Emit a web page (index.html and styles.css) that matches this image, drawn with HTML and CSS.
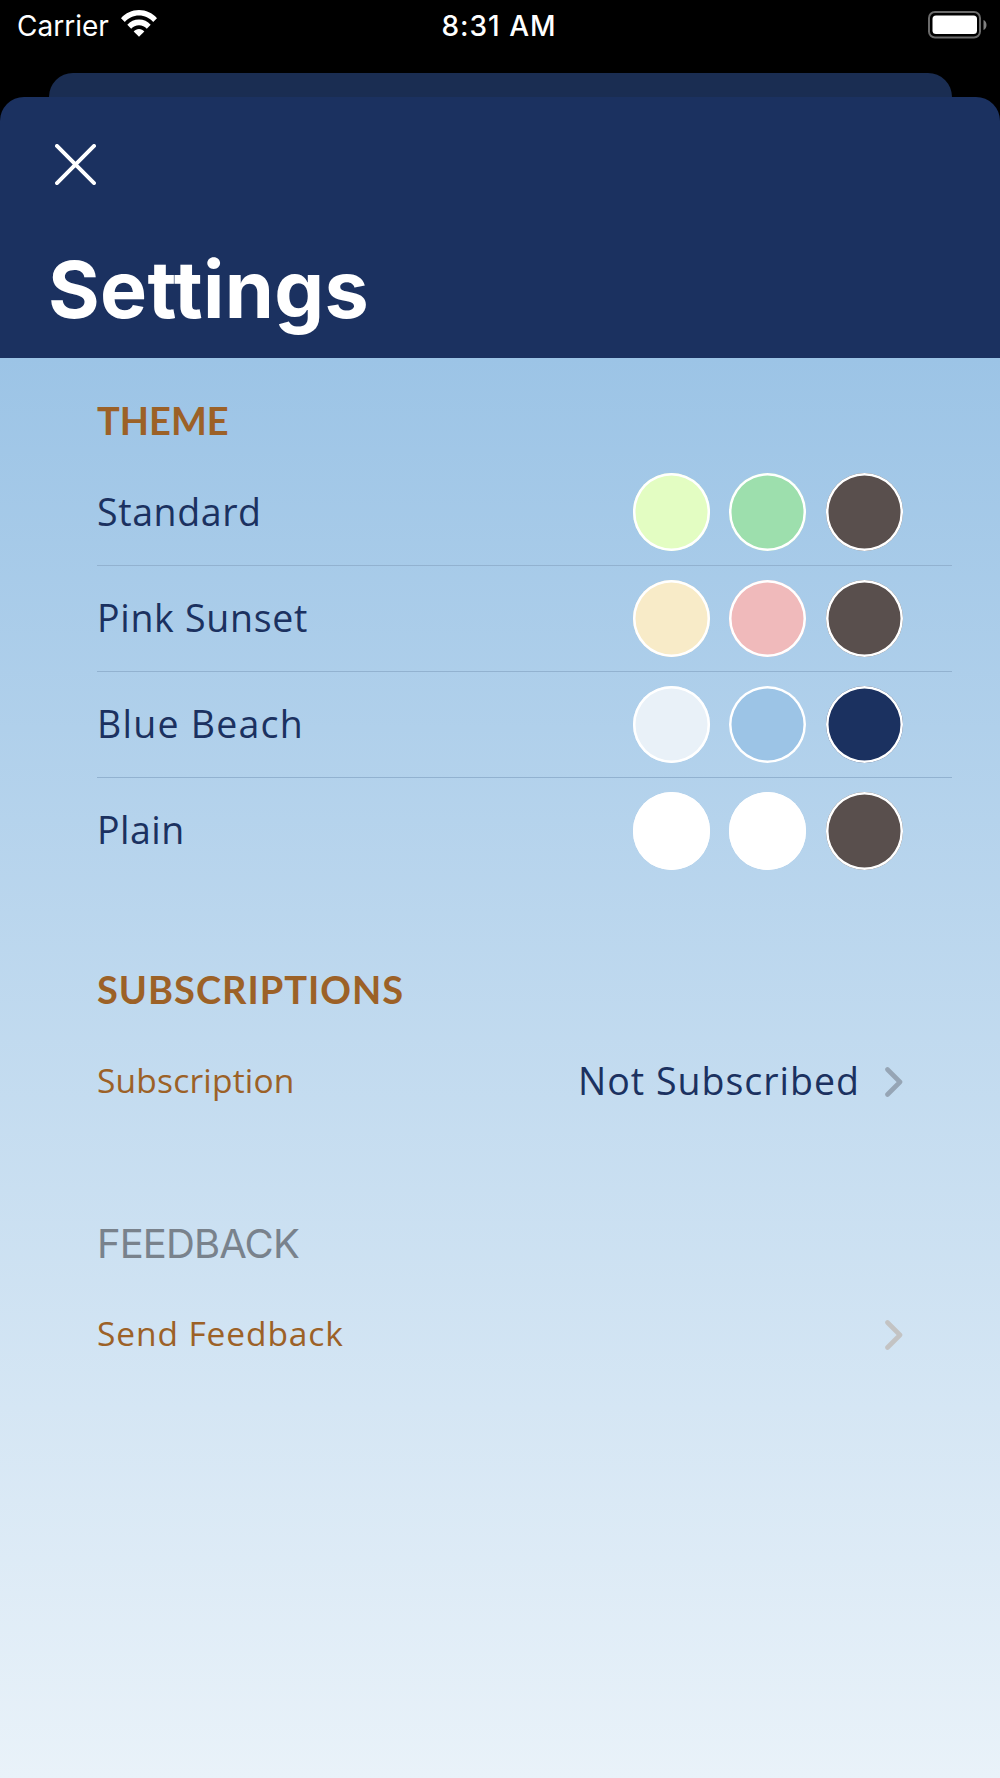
FILE: index.html
```html
<!DOCTYPE html>
<html lang="en">
<head>
    <meta charset="UTF-8">
    <meta name="viewport" content="width=device-width, initial-scale=1.0">
    <title>Settings</title>
    <link rel="stylesheet" href="styles.css">
</head>

<body>
    <div class="status-bar">
        <div class="carrier">
            <span class="carrier-name">Carrier</span>
            <svg class="wifi" viewBox="0 0 36 27">
                <path d="M0 8.2C4.6 3 11 0 18 0s13.400 3 18 8.200l-3.800 3.900C28.600 8 23.600 5.600 18 5.600S7.400 8 3.800 12.100z"/>
                <path d="M6.300 14.700C9.300 11.400 13.400 9.500 18 9.500s8.700 1.900 11.700 5.200l-3.900 4C23.900 16.500 21.100 15.200 18 15.200s-5.900 1.300-7.800 3.500z"/>
                <path d="M12.700 21.400C14 19.800 15.900 18.900 18 18.900s4 .9 5.300 2.500L18 26.800z"/>
            </svg>
        </div>
        <span class="time">8:31 AM</span>
        <div class="battery-wrap">
            <svg class="battery" viewBox="0 0 59 28">
                <rect x="1" y="1" width="51" height="25.500" rx="6" fill="none" stroke="#6b6b6b" stroke-width="2"/>
                <rect x="4.500" y="4.500" width="44.500" height="18.500" rx="3.500" fill="#fff"/>
                <path d="M55.500 9c4 1.500 4 8.500 0 10z" fill="#808080"/>
            </svg>
        </div>
    </div>

    <div class="back-card"></div>

    <div class="sheet">
        <div class="header">
            <svg class="close" viewBox="0 0 42 42">
                <path d="M2 2l38 38M40 2L2 40"/>
            </svg>
            <h1>Settings</h1>
        </div>

        <div class="content">
            <h2 class="theme-title">THEME</h2>
            <div class="row">
                <span class="name standard">Standard</span>
                <div class="swatches">
                    <i class="swatch lime"></i>
                    <i class="swatch green"></i>
                    <i class="swatch brown"></i>
                </div>
            </div>
            <div class="row">
                <span class="name pink-sunset">Pink Sunset</span>
                <div class="swatches">
                    <i class="swatch cream"></i>
                    <i class="swatch pink"></i>
                    <i class="swatch brown"></i>
                </div>
            </div>
            <div class="row">
                <span class="name blue-beach">Blue Beach</span>
                <div class="swatches">
                    <i class="swatch ice"></i>
                    <i class="swatch sky"></i>
                    <i class="swatch navy"></i>
                </div>
            </div>
            <div class="row last">
                <span class="name plain">Plain</span>
                <div class="swatches">
                    <i class="swatch white"></i>
                    <i class="swatch white"></i>
                    <i class="swatch brown"></i>
                </div>
            </div>

            <h2 class="subscriptions-title">SUBSCRIPTIONS</h2>
            <div class="row last">
                <span class="link subscription">Subscription</span>
                <div class="detail">
                    <span class="name value">Not Subscribed</span>
                    <svg class="chevron dark" viewBox="0 0 18 30"><path d="M2.500 2.500L15 15 2.500 27.500"/></svg>
                </div>
            </div>

            <h2 class="feedback-title">FEEDBACK</h2>
            <div class="row last">
                <span class="link send">Send Feedback</span>
                <svg class="chevron" viewBox="0 0 18 30"><path d="M2.500 2.500L15 15 2.500 27.500"/></svg>
            </div>
        </div>
    </div>
</body>
</html>
```
FILE: styles.css
```css
* {
    box-sizing: border-box;
}

body {
    margin: 0;
    min-height: 1778px;
    background: #000;
    font-family: "Open Sans", sans-serif;
    display: flex;
    flex-direction: column;
}

h1,
h2 {
    margin: 0;
}

.status-bar {
    height: 72.500px;
    padding: 0 13px 0 17px;
    display: grid;
    grid-template-columns: 1fr auto 1fr;
    color: #fff;
    font-family: Inter, sans-serif;
    font-size: 28px;
    line-height: 52px;
}

.carrier {
    display: flex;
    gap: 12px;
}

.wifi {
    width: 36px;
    height: 27px;
    margin-top: 10px;
    fill: #fff;
}

.time {
    margin: 0 3px 0 -3px;
    font-weight: 500;
    letter-spacing: 1px;
}

.battery-wrap {
    display: flex;
    justify-content: flex-end;
}

.battery {
    width: 59px;
    height: 28px;
    margin-top: 10.500px;
}

.back-card {
    height: 50px;
    margin: 0 48.500px -25.500px;
    border-radius: 24px 24px 0 0;
    background: #1a2d52;
}

.sheet {
    flex: 1;
    display: flex;
    flex-direction: column;
    border-radius: 24px 24px 0 0;
    overflow: hidden;
}

.header {
    height: 260.500px;
    padding: 47px 48px 0;
    background: #1b3160;
}

.close {
    display: block;
    width: 41px;
    height: 41px;
    margin-left: 7px;
    fill: none;
    stroke: #fff;
    stroke-width: 4;
    stroke-linecap: round;
}

h1 {
    margin-top: 56px;
    color: #fff;
    font-family: Inter, sans-serif;
    font-size: 79px;
    font-weight: 700;
    letter-spacing: 0.300px;
    line-height: 96px;
}

.content {
    flex: 1;
    padding-left: 97px;
    background: linear-gradient(#9cc4e6, #e9f2f9);
}

h2 {
    display: flex;
    align-items: flex-end;
    color: #9c6127;
    font-family: Lato, sans-serif;
    font-size: 38px;
    font-weight: 700;
    line-height: 44px;
}

.theme-title {
    height: 102px;
    padding-bottom: 18px;
}

.subscriptions-title {
    height: 144px;
    padding-bottom: 18px;
    letter-spacing: 1px;
}

.feedback-title {
    height: 147px;
    padding-bottom: 16px;
    color: #79828c;
    font-family: Inter, sans-serif;
    font-size: 40px;
    font-weight: 400;
    letter-spacing: -0.900px;
}

.row {
    height: 106.250px;
    margin-right: 48.500px;
    padding-right: 48.500px;
    display: flex;
    align-items: center;
    justify-content: space-between;
    border-bottom: 1px solid #92b2d0;
}

.row.last {
    border-bottom-color: transparent;
}

.name {
    padding-bottom: 2px;
    color: #1b3160;
    font-size: 37.500px;
}

.link {
    padding-bottom: 2px;
    color: #9c6127;
    font-size: 33.500px;
}

.standard { letter-spacing: 0.600px; }
.pink-sunset { letter-spacing: 0.700px; }
.blue-beach { letter-spacing: 1.250px; }
.plain { letter-spacing: 0.500px; }
.subscription { letter-spacing: 0.200px; }
.value { letter-spacing: 1px; }
.send { letter-spacing: 0.900px; }

.swatches {
    display: flex;
    gap: 19.300px;
}

.swatch {
    width: 77.300px;
    height: 77.300px;
    border-radius: 50%;
    box-shadow: inset 0 0 0 2.500px #fff;
}

.lime { background: #e3fdc2; }
.green { background: #9ddfad; }
.brown { background: #594f4d; }
.cream { background: #f8ebc8; }
.pink { background: #f0babb; }
.ice { background: #e9f1f8; }
.sky { background: #9cc4e6; }
.navy { background: #1b3160; }
.white { background: #fff; }

.detail {
    display: flex;
    align-items: center;
    gap: 25px;
}

.chevron {
    width: 18px;
    height: 30px;
    margin-top: 2px;
    fill: none;
    stroke: #c3c3c3;
    stroke-width: 4.600;
    stroke-linecap: round;
    stroke-linejoin: round;
}

.chevron.dark {
    stroke: #96a5b5;
}
```
